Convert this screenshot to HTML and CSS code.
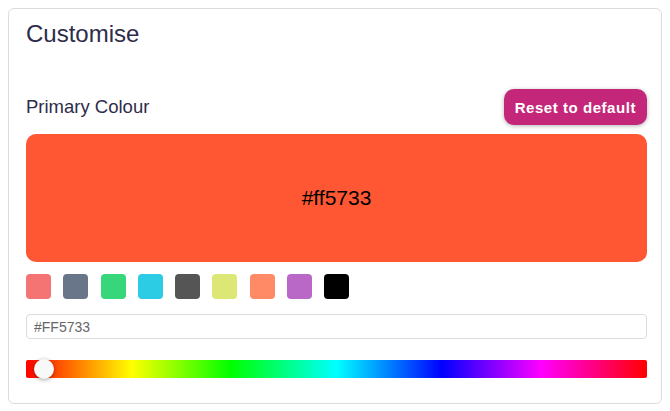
FILE: index.html
```html
<!DOCTYPE html>
<html lang="en">
<head>
  <meta charset="UTF-8">
  <title>Customise</title>
  <link rel="stylesheet" href="styles.css">
</head>
<body>

  <div class="card">
    <h2 class="card-title">Customise</h2>

    <div class="field-head">
      <label>Primary Colour</label>
      <button class="reset-btn">Reset to default</button>
    </div>

    <div class="preview">#ff5733</div>

    <div class="swatches">
      <span class="swatch" style="background:#f47373"></span>
      <span class="swatch" style="background:#697689"></span>
      <span class="swatch" style="background:#37d67a"></span>
      <span class="swatch" style="background:#2ccce4"></span>
      <span class="swatch" style="background:#555555"></span>
      <span class="swatch" style="background:#dce775"></span>
      <span class="swatch" style="background:#ff8a65"></span>
      <span class="swatch" style="background:#ba68c8"></span>
      <span class="swatch" style="background:#000000"></span>
    </div>

    <input type="text" class="hex-input" value="#FF5733">

    <div class="hue">
      <span class="hue-thumb" style="left:1.3%"></span>
    </div>
  </div>

</body>
</html>
```

FILE: styles.css
```css
* {
  box-sizing: border-box;
  font-family: "Liberation Sans", Arial, sans-serif;
}

body {
  margin: 8px;
  background: #fff;
}

.card {
  border: 1px solid #dcdcdc;
  border-radius: 6px;
  padding: 11px 14px 24px 17px;
  height: 396px;
}

.card-title {
  margin: 0;
  font-size: 24px;
  font-weight: normal;
  line-height: 28px;
  color: #2d2c4a;
}

.field-head {
  display: flex;
  justify-content: space-between;
  align-items: center;
  margin-top: 41px;
}

.field-head label {
  font-size: 18.5px;
  color: #2d2c4a;
}

.reset-btn {
  height: 36px;
  padding: 0 11px;
  border: none;
  border-radius: 10px;
  background: #c4277a;
  color: #fff;
  font-size: 15px;
  font-weight: bold;
  letter-spacing: 0.55px;
  box-shadow: 0 1px 4px rgba(0, 0, 0, 0.3);
}

.preview {
  display: flex;
  align-items: center;
  justify-content: center;
  height: 128px;
  margin-top: 9px;
  border-radius: 10px;
  background: #ff5733;
  color: #000;
  font-size: 21px;
}

.swatches {
  display: flex;
  gap: 12.3px;
  margin-top: 12px;
}

.swatch {
  width: 25px;
  height: 25px;
  border-radius: 4px;
}

.hex-input {
  display: block;
  width: 100%;
  height: 25px;
  margin-top: 15px;
  padding: 0 7px;
  border: 1px solid #dcdcdc;
  border-radius: 4px;
  color: #666;
  font-size: 14px;
}

.hue {
  position: relative;
  height: 18px;
  margin-top: 21px;
  border-radius: 2px;
  background: linear-gradient(to right, #f00 0%, #ff0 17%, #0f0 33%, #0ff 50%, #00f 67%, #f0f 83%, #f00 100%);
}

.hue-thumb {
  position: absolute;
  top: -1px;
  width: 20px;
  height: 20px;
  border-radius: 50%;
  background: #f8f8f8;
  box-shadow: 0 1px 4px rgba(0, 0, 0, 0.37);
}
```
